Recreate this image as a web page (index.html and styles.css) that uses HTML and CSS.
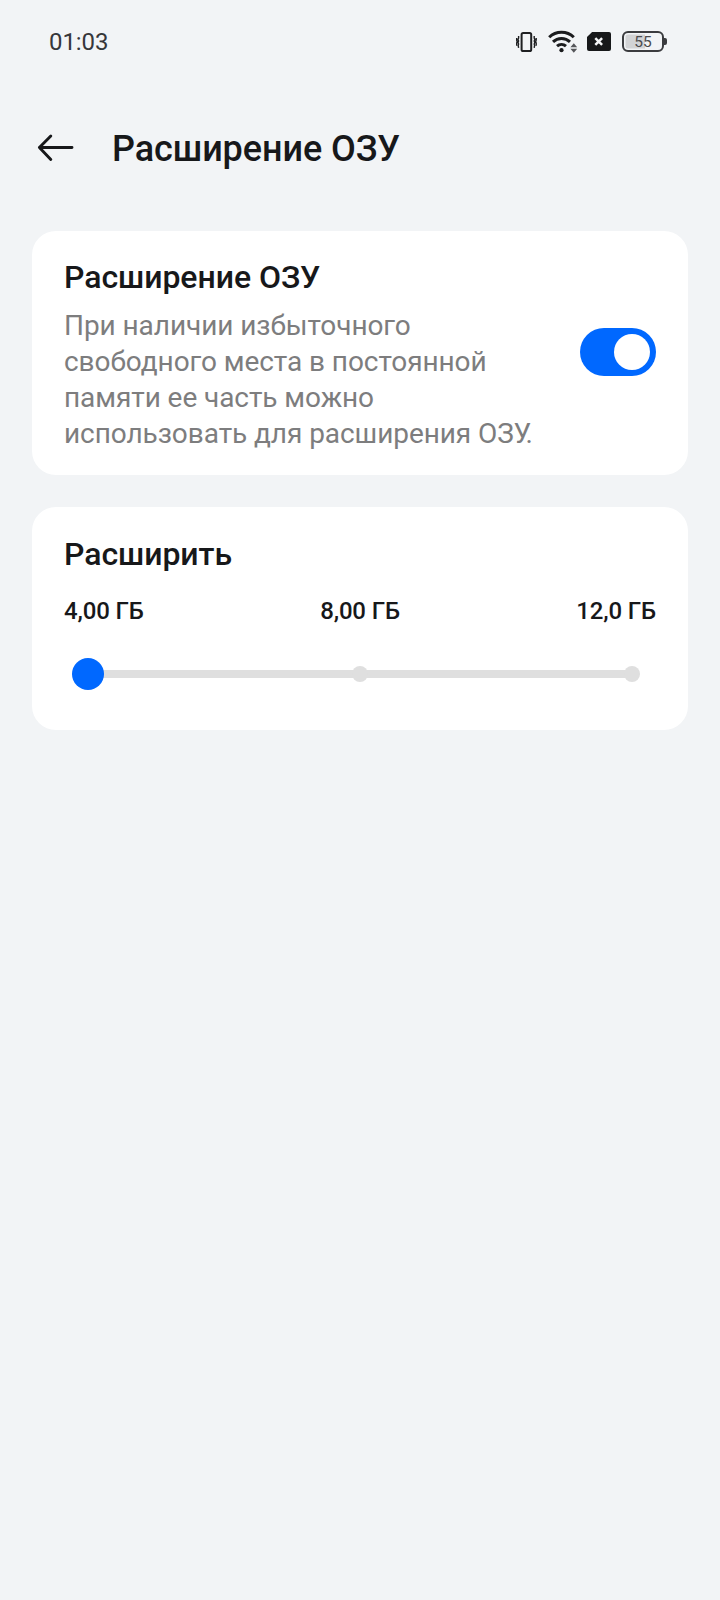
FILE: index.html
```html
<!DOCTYPE html>
<html lang="ru">
<head>
<meta charset="utf-8">
<title>Расширение ОЗУ</title>
<link rel="stylesheet" href="styles.css">
</head>
<body>
<div class="statusbar">
  <span class="clock">01:03</span>
  <div class="status-icons">
    <svg class="vibrate" width="22" height="22" viewBox="0 0 22 22" fill="none" stroke="#1f2022">
      <rect x="5.6" y="2" width="9.6" height="18" rx="1.6" stroke-width="2"/>
      <path d="M2.6 5v2l-.6 1.4.6 1.5-.6 1.6.6 1.5-.4 1.4.4 2.4M.6 7v2l.5 1.6-.5 1.6v2.6M18.2 5v2l.6 1.4-.6 1.5.6 1.6-.6 1.5.4 1.4-.4 2.4M20.2 7v2l-.5 1.6.5 1.6v2.6" stroke-width="1.4"/>
    </svg>
    <svg class="wifi" width="30" height="24" viewBox="0 0 30 24" fill="none" stroke="#1b1c1e">
      <path d="M1.2 7.2a17.6 17.6 0 0 1 24.6 0M5 11.8a12.3 12.3 0 0 1 17 0M9 16.2a6.8 6.8 0 0 1 9 0" stroke-width="3"/>
      <circle cx="13.5" cy="20.2" r="2.1" fill="#1b1c1e" stroke="none"/>
      <path d="M22.4 17.2l3.4-4 3.4 4zM22.4 18.8l3.4 4 3.4-4z" fill="#55565a" stroke="none"/>
    </svg>
    <svg class="sim" width="25" height="20" viewBox="0 0 25 20">
      <path d="M5.1 0h16.9a2 2 0 0 1 2 2v15a2 2 0 0 1-2 2h-20a2 2 0 0 1-2-2V5.1z" fill="#17181a"/>
      <path d="M8.3 6.1l6.8 6.8M15.1 6.1l-6.8 6.8" stroke="#f4f5f7" stroke-width="2.5"/>
    </svg>
    <div class="battery"><span class="battery-level">55</span></div>
  </div>
</div>
<header class="header">
  <svg class="back" width="38" height="30" viewBox="0 0 38 30" fill="none" stroke="#17181a" stroke-width="2.9" stroke-linecap="round" stroke-linejoin="round">
    <path d="M35 14.5H2.4M13.8 3L2.4 14.5l11.4 12"/>
  </svg>
  <h1 class="title">Расширение ОЗУ</h1>
</header>
<main class="content">
  <section class="card card-toggle">
    <div class="card-text">
      <h2 class="heading">Расширение ОЗУ</h2>
      <p class="description">При наличии избыточного<br>свободного места в постоянной<br>памяти ее часть можно<br>использовать для расширения ОЗУ.</p>
    </div>
    <div class="switch" role="switch" aria-checked="true"><span class="knob"></span></div>
  </section>
  <section class="card card-slider">
    <h2 class="heading">Расширить</h2>
    <div class="labels"><span>4,00 ГБ</span><span>8,00 ГБ</span><span>12,0 ГБ</span></div>
    <div class="slider">
      <span class="thumb"></span><span class="stop"></span><span class="stop"></span>
    </div>
  </section>
</main>
</body>
</html>
```
FILE: styles.css
```css
* { box-sizing: border-box; }
body {
  margin: 0;
  min-height: 1600px;
  background: #f2f4f6;
  color: #17181a;
  font-family: Roboto, "Noto Sans", sans-serif;
}
h1, h2, p { margin: 0; font-weight: 500; white-space: nowrap; }
.statusbar {
  display: flex;
  justify-content: space-between;
  align-items: center;
  height: 83px;
  padding: 0 56px 0 49px;
}
.clock { font-size: 24px; line-height: 28px; letter-spacing: -0.1px; color: #36373a; }
.status-icons { display: flex; align-items: center; }
.vibrate { margin-right: 10px; }
.wifi { margin-right: 9px; }
.sim { margin-right: 10px; }
.battery {
  position: relative;
  display: flex;
  align-items: center;
  justify-content: center;
  width: 42px;
  height: 21px;
  padding-top: 1px;
  border: 2px solid #3b3c3f;
  border-radius: 6px;
  background: linear-gradient(90deg, #d2d3d5 0 55%, #f2f4f6 55%);
  box-shadow: inset 0 0 0 1.5px #f2f4f6;
}
.battery::after {
  content: "";
  position: absolute;
  left: 40px;
  top: 5px;
  width: 2.5px;
  height: 7px;
  border-radius: 0 2px 2px 0;
  background: #3b3c3f;
}
.battery-level { font-size: 15.5px; line-height: 17px; color: #4a4b4e; }
.header {
  display: flex;
  align-items: center;
  gap: 37px;
  height: 130px;
  padding-left: 37px;
}
.title { padding-top: 2px; font-size: 36px; line-height: 42px; letter-spacing: -0.08px; }
.content {
  display: flex;
  flex-direction: column;
  gap: 32px;
  padding: 17.5px 32px 0;
}
.card { padding: 28px 32px 0; border-radius: 24px; background: #fff; }
.card-toggle { display: flex; justify-content: space-between; height: 244px; padding-top: 27px; }
.heading { font-size: 32px; line-height: 38px; letter-spacing: -0.05px; }
.description {
  margin-top: 12px;
  font-size: 28px;
  font-weight: 400;
  line-height: 36.2px;
  letter-spacing: -0.07px;
  color: #7d7d7e;
}
.switch {
  display: flex;
  justify-content: flex-end;
  flex: none;
  width: 76px;
  height: 48px;
  margin-top: 70.5px;
  padding: 6px;
  border-radius: 24px;
  background: #0068ff;
}
.knob { width: 36px; height: 36px; border-radius: 50%; background: #fff; }
.card-slider { height: 223px; }
.labels {
  display: flex;
  justify-content: space-between;
  margin-top: 24px;
  font-size: 24px;
  font-weight: 500;
  line-height: 28px;
  letter-spacing: -0.15px;
}
.slider {
  display: grid;
  grid-template-columns: 280px 1fr 16px;
  align-items: center;
  width: 568px;
  height: 32px;
  margin: 33px 0 0 8px;
  background: linear-gradient(#dfdfdf, #dfdfdf) 16px center / 544px 8px no-repeat;
}
.thumb { width: 32px; height: 32px; border-radius: 50%; background: #0068ff; }
.stop { width: 16px; height: 16px; border-radius: 50%; background: #dfdfdf; }
```
